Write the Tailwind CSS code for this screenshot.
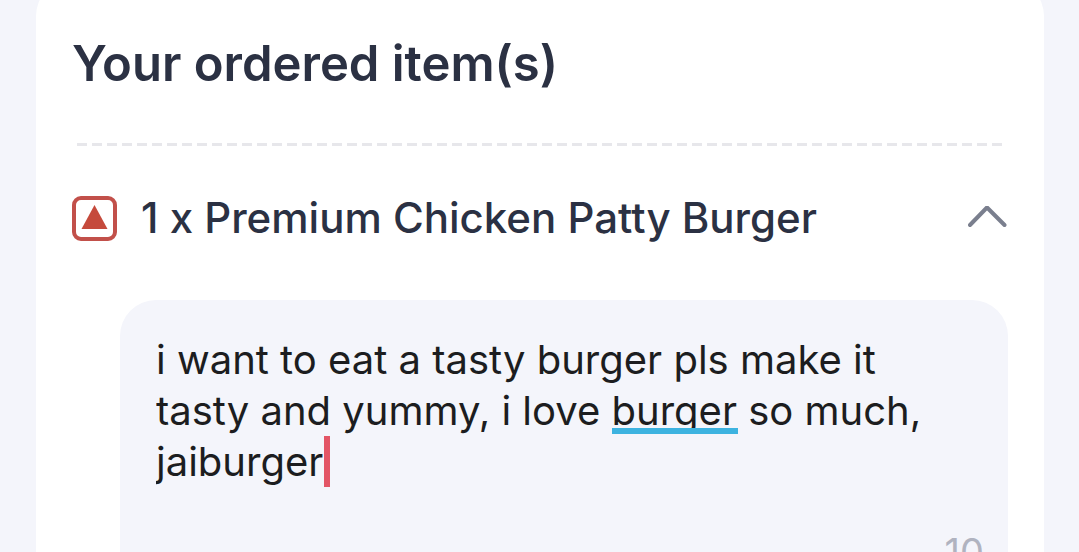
<!DOCTYPE html>
<html lang="en">
<head>
  <meta charset="UTF-8" />
  <meta name="viewport" content="width=device-width, initial-scale=1.0" />
  <title>Your ordered item(s)</title>
  <script src="https://cdn.jsdelivr.net/npm/@tailwindcss/browser@4"></script>
</head>
<body class="h-screen overflow-hidden bg-[#f4f5fb] pr-[35px] pl-9 font-['Inter',sans-serif] text-[#2b3143]">

  <!-- Order card -->
  <main class="-mt-5 rounded-[36px] bg-white px-9 pt-[52px] pb-9">
    <h1 class="text-[49px] leading-[64px] font-semibold">Your ordered item(s)</h1>

    <!-- Dashed divider -->
    <div class="mx-[5px] mt-[47px] h-[3px] bg-[repeating-linear-gradient(90deg,#e7e7eb_0_10px,transparent_10px_15px)]"></div>

    <!-- Item row -->
    <div class="mt-11 flex items-center gap-6">
      <svg class="h-[46px] w-[45px] shrink-0" viewBox="0 0 45 46" role="img" aria-label="Non-veg">
        <rect x="2" y="3" width="41" height="41" rx="7" fill="none" stroke="#c2504a" stroke-width="4" />
        <path d="M22.500 10 L35.500 34 H9.500 Z" fill="#c54a3c" />
      </svg>
      <h2 class="flex-1 text-[42px] leading-[56px] font-medium">1 x Premium Chicken Patty Burger</h2>
      <button type="button" aria-label="Collapse item" class="shrink-0">
        <svg class="h-6 w-10" viewBox="0 0 40 24" fill="none" stroke="#7a7f8e" stroke-width="4" stroke-linecap="round" stroke-linejoin="round">
          <path d="M2 19 L19 1.500 L36.500 19" />
        </svg>
      </button>
    </div>

    <!-- Cooking request -->
    <div class="mt-[54px] ml-12 rounded-[36px] bg-[#f4f5fb] px-9 pt-[34px] pb-8">
      <div class="relative text-[40px] leading-[51px] text-[#1c1d20]">
        <textarea aria-label="Cooking request" rows="4" spellcheck="false" class="block w-full resize-none overflow-hidden bg-transparent caret-[#e35566] outline-none">i want to eat a tasty burger pls make it tasty and yummy, i love burger so much, jaiburger</textarea>
        <!-- Spelling mark and caret over the text -->
        <span class="pointer-events-none absolute top-[94px] left-[456px] h-1.5 w-[126px] bg-[#3db3e0]"></span>
        <span class="pointer-events-none absolute top-[102px] left-[168px] h-[51px] w-1.5 bg-[#e35566]"></span>
      </div>
      <p class="-mr-3 text-right text-[38px] leading-7 text-[#b0b3c0]">10</p>
    </div>
  </main>

</body>
</html>
